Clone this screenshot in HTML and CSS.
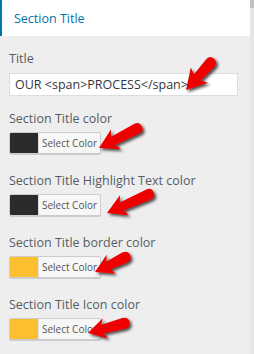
FILE: index.html
```html
<html>
<head>
<link rel="stylesheet" href="styles.css">
</head>
<body>

<div class="panel">
    <!-- section header -->
    <div class="head">
        <h3>Section Title</h3>
    </div>

    <!-- controls -->
    <div class="body">
        <div class="field first">
            <label>Title</label>
            <input class="text" type="text" value="OUR &lt;span&gt;PROCESS&lt;/span&gt;">
        </div>

        <div class="field">
            <label>Section Title color</label>
            <button class="pick"><span class="swatch dark"></span><span class="txt">Select Color</span></button>
        </div>

        <div class="field">
            <label>Section Title Highlight Text color</label>
            <button class="pick"><span class="swatch dark"></span><span class="txt">Select Color</span></button>
        </div>

        <div class="field">
            <label>Section Title border color</label>
            <button class="pick"><span class="swatch yel"></span><span class="txt">Select Color</span></button>
        </div>

        <div class="field">
            <label>Section Title Icon color</label>
            <button class="pick"><span class="swatch yel"></span><span class="txt">Select Color</span></button>
        </div>
    </div>

    <div class="scroll"><div class="thumb"></div></div>

    <!-- red arrows drawn over the screenshot -->
    <svg class="arrows" width="254" height="354" viewBox="0 0 254 354">
        <defs>
            <filter id="shade" x="-30%" y="-30%" width="160%" height="160%">
                <feDropShadow dx="2" dy="2" stdDeviation="1.4" flood-color="#000" flood-opacity="0.7"/>
            </filter>
        </defs>
        <g fill="#ee0000" filter="url(#shade)">
            <path transform="translate(186 90) rotate(-48)" d="M0 0 L20 -11.5 L17 -4.5 L36 -5.5 Q42 -5.5 42 0 Q42 5.5 36 5.5 L17 4.5 L20 11.5 Z"/>
            <path transform="translate(99 148) rotate(-27)" d="M0 0 L19 -11 L16 -4.5 L42 -5.5 Q48 -5.5 48 0 Q48 5.5 42 5.5 L16 4.5 L19 11 Z"/>
            <path transform="translate(107 213) rotate(-24)" d="M0 0 L19 -11 L16 -4.5 L45 -5.5 Q51 -5.5 51 0 Q51 5.5 45 5.5 L16 4.5 L19 11 Z"/>
            <path transform="translate(95 272) rotate(-26)" d="M0 0 L18 -10.5 L15 -4.5 L33 -5.5 Q39 -5.5 39 0 Q39 5.5 33 5.5 L15 4.5 L18 10.5 Z"/>
            <path transform="translate(88 333) rotate(-15)" d="M0 0 L18 -10.5 L15 -4.5 L37 -5.5 Q43 -5.5 43 0 Q43 5.5 37 5.5 L15 4.5 L18 10.5 Z"/>
        </g>
    </svg>
</div>

</body>
</html>
```

FILE: styles.css
```css
html, body {
    margin: 0;
    padding: 0;
}
body {
    background-color: #eeeeee;
    font-family: "Open Sans", "Noto Sans", Arial, sans-serif;
}
.panel {
    position: relative;
    width: 254px;
    height: 354px;
    overflow: hidden;
}
.head {
    background-color: #ffffff;
    width: 250px;
    height: 36px;
    border-left: 2px solid #0073aa;
    box-sizing: border-box;
    display: flex;
    align-items: center;
}
.head h3 {
    margin: 0;
    padding-left: 12px;
    font-size: 12.5px;
    font-weight: normal;
    color: #0073aa;
}
.body {
    padding: 14px 16px 0 9px;
    display: flex;
    flex-direction: column;
}
.field {
    display: flex;
    flex-direction: column;
    align-items: flex-start;
    margin-bottom: 18px;
}
.field.first {
    margin-bottom: 14px;
}
.field label {
    font-size: 12.5px;
    line-height: 18px;
    color: #555d66;
    margin-bottom: 4px;
}
.field.first label {
    margin-bottom: 5px;
}
.text {
    width: 229px;
    height: 23px;
    box-sizing: border-box;
    margin: 0;
    border: 1px solid #dddddd;
    background: #ffffff;
    padding: 0 5px;
    font-family: "Open Sans", "Noto Sans", Arial, sans-serif;
    font-size: 12.5px;
    color: #32373c;
    outline: none;
}
.pick {
    display: flex;
    align-items: stretch;
    width: 92px;
    height: 22px;
    padding: 0;
    margin: 0;
    border: 1px solid #cccccc;
    border-radius: 2px;
    background: #f7f7f7;
    box-shadow: 0 1px 0 #cccccc;
    overflow: hidden;
}
.swatch {
    width: 28px;
    border-right: 1px solid #dddddd;
}
.dark {
    background-color: #2b2b2b;
}
.yel {
    background-color: #fcbf30;
}
.txt {
    flex: 1;
    display: flex;
    align-items: center;
    justify-content: center;
    font-family: "Open Sans", "Noto Sans", Arial, sans-serif;
    font-size: 10px;
    color: #555555;
}
.scroll {
    position: absolute;
    top: 0;
    right: 0;
    width: 4px;
    height: 354px;
    background-color: #e6e6e6;
}
.thumb {
    height: 8px;
    background-color: #c1c1c1;
}
.arrows {
    position: absolute;
    top: 0;
    left: 0;
}
```
